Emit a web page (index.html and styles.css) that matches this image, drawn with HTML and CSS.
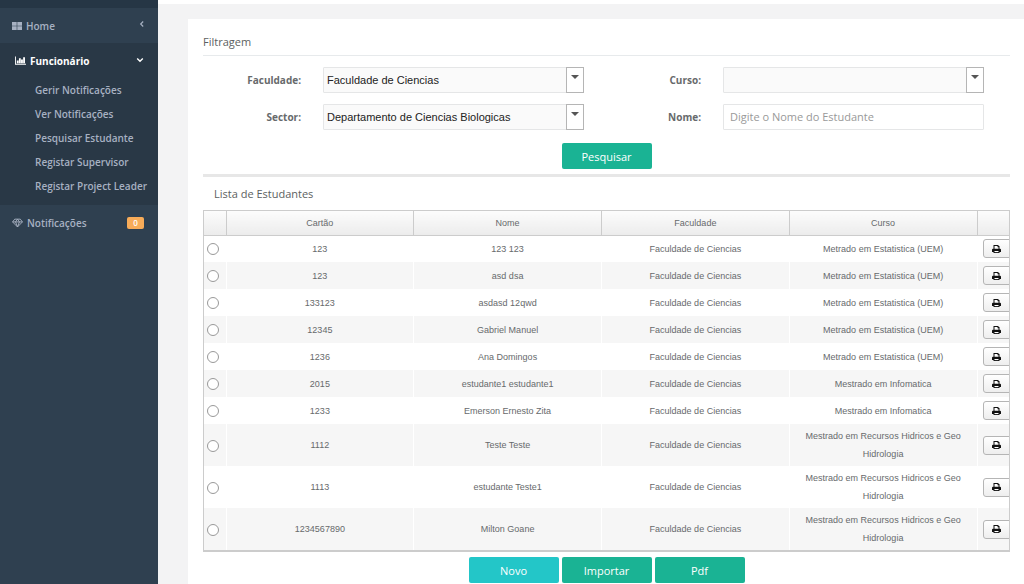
FILE: index.html
```html
<!DOCTYPE html>
<html lang="pt">
<head>
<meta charset="utf-8">
<title>Estudantes</title>
<link rel="stylesheet" href="styles.css">
</head>
<body>
<svg class="sprite" aria-hidden="true">
  <symbol id="printer" viewBox="0 0 18 16"><path fill="#111" d="M3 0h9l3 3v5H3z"/><path fill="#fff" d="M5 2h6v2.500h2V8H5z"/><path fill="#111" d="M2 7.500h14A2 2 0 0 1 18 9.500v4.500h-3v2H3v-2H0V9.500A2 2 0 0 1 2 7.500z"/><path fill="#fff" d="M5 12h8v2.200H5z"/></symbol>
</svg>
<div class="layout">
  <nav class="sidebar">
    <div class="brand"></div>
    <a class="item" href="#">
      <svg class="icon-home" viewBox="0 0 10 8"><path fill="currentColor" d="M0 0h4.700v3.700H0zM5.300 0H10v3.700H5.300zM0 4.300h4.700V8H0zM5.300 4.300H10V8H5.300z"/></svg>
      <span class="label">Home</span>
      <svg class="arrow raised" viewBox="0 0 8 8"><path fill="none" stroke="currentColor" stroke-width="1.200" d="M5.200 1.500L2.700 4l2.500 2.500"/></svg>
    </a>
    <div class="group">
      <a class="item active" href="#">
        <svg class="icon-chart" viewBox="0 0 12 9"><path fill="currentColor" d="M0 0h1v8h11v1H0zM2 4.500h2v3H2zM4.300 2h2v5.500h-2zM6.600 3.500h2v4h-2zM8.900 1h2v6.500h-2z"/></svg>
        <span class="label">Funcionário</span>
        <svg class="arrow" viewBox="0 0 8 8"><path fill="none" stroke="currentColor" stroke-width="1.400" d="M1.200 1.500L4 4.300 6.800 1.500"/></svg>
      </a>
      <ul class="submenu">
        <li><a href="#">Gerir Notificações</a></li>
        <li><a href="#">Ver Notificações</a></li>
        <li><a href="#">Pesquisar Estudante</a></li>
        <li><a href="#">Registar Supervisor</a></li>
        <li><a href="#">Registar Project Leader</a></li>
      </ul>
    </div>
    <a class="item" href="#">
      <svg class="icon-gem" viewBox="0 0 12 10"><path fill="none" stroke="currentColor" d="M3 .8h6l2.400 3L6 9.300.6 3.800zM.6 3.800h10.800M3.900 3.800L6 9.300l2.100-5.500M3.900 3.800L6 .8l2.100 3"/></svg>
      <span class="label">Notificações</span>
      <span class="badge">0</span>
    </a>
  </nav>
  <div class="page">
    <header class="topbar"></header>
    <main class="panel">
      <h1 class="title">Filtragem</h1>
      <form class="filters">
        <label for="fac">Faculdade:</label>
        <span class="combo"><select id="fac"><option>Faculdade de Ciencias</option></select></span>
        <label for="curso">Curso:</label>
        <span class="combo"><select id="curso"><option></option></select></span>
        <label class="first" for="sector">Sector:</label>
        <span class="combo"><select id="sector"><option>Departamento de Ciencias Biologicas</option></select></span>
        <label for="nome">Nome:</label>
        <input class="text" id="nome" type="text" placeholder="Digite o Nome do Estudante">
        <div class="submit"><button class="btn" type="button">Pesquisar</button></div>
      </form>
      <h2 class="subtitle">Lista de Estudantes</h2>
      <div class="grid">
        <table>
          <colgroup><col class="c-radio"><col><col><col><col><col class="c-print"></colgroup>
          <thead><tr><th></th><th>Cartão</th><th>Nome</th><th>Faculdade</th><th>Curso</th><th></th></tr></thead>
          <tbody>
            <tr><td><input type="radio" name="s" aria-label="123 123"></td><td>123</td><td>123 123</td><td>Faculdade de Ciencias</td><td>Metrado em Estatistica (UEM)</td><td><button class="print" type="button" aria-label="Imprimir"><svg><use href="#printer"/></svg></button></td></tr>
            <tr><td><input type="radio" name="s" aria-label="asd dsa"></td><td>123</td><td>asd dsa</td><td>Faculdade de Ciencias</td><td>Metrado em Estatistica (UEM)</td><td><button class="print" type="button" aria-label="Imprimir"><svg><use href="#printer"/></svg></button></td></tr>
            <tr><td><input type="radio" name="s" aria-label="asdasd 12qwd"></td><td>133123</td><td>asdasd 12qwd</td><td>Faculdade de Ciencias</td><td>Metrado em Estatistica (UEM)</td><td><button class="print" type="button" aria-label="Imprimir"><svg><use href="#printer"/></svg></button></td></tr>
            <tr><td><input type="radio" name="s" aria-label="Gabriel Manuel"></td><td>12345</td><td>Gabriel Manuel</td><td>Faculdade de Ciencias</td><td>Metrado em Estatistica (UEM)</td><td><button class="print" type="button" aria-label="Imprimir"><svg><use href="#printer"/></svg></button></td></tr>
            <tr><td><input type="radio" name="s" aria-label="Ana Domingos"></td><td>1236</td><td>Ana Domingos</td><td>Faculdade de Ciencias</td><td>Metrado em Estatistica (UEM)</td><td><button class="print" type="button" aria-label="Imprimir"><svg><use href="#printer"/></svg></button></td></tr>
            <tr><td><input type="radio" name="s" aria-label="estudante1 estudante1"></td><td>2015</td><td>estudante1 estudante1</td><td>Faculdade de Ciencias</td><td>Mestrado em Infomatica</td><td><button class="print" type="button" aria-label="Imprimir"><svg><use href="#printer"/></svg></button></td></tr>
            <tr><td><input type="radio" name="s" aria-label="Emerson Ernesto Zita"></td><td>1233</td><td>Emerson Ernesto Zita</td><td>Faculdade de Ciencias</td><td>Mestrado em Infomatica</td><td><button class="print" type="button" aria-label="Imprimir"><svg><use href="#printer"/></svg></button></td></tr>
            <tr><td><input type="radio" name="s" aria-label="Teste Teste"></td><td>1112</td><td>Teste Teste</td><td>Faculdade de Ciencias</td><td>Mestrado em Recursos Hidricos e Geo Hidrologia</td><td><button class="print" type="button" aria-label="Imprimir"><svg><use href="#printer"/></svg></button></td></tr>
            <tr><td><input type="radio" name="s" aria-label="estudante Teste1"></td><td>1113</td><td>estudante Teste1</td><td>Faculdade de Ciencias</td><td>Mestrado em Recursos Hidricos e Geo Hidrologia</td><td><button class="print" type="button" aria-label="Imprimir"><svg><use href="#printer"/></svg></button></td></tr>
            <tr><td><input type="radio" name="s" aria-label="Milton Goane"></td><td>1234567890</td><td>Milton Goane</td><td>Faculdade de Ciencias</td><td>Mestrado em Recursos Hidricos e Geo Hidrologia</td><td><button class="print" type="button" aria-label="Imprimir"><svg><use href="#printer"/></svg></button></td></tr>
          </tbody>
        </table>
      </div>
      <div class="actions">
        <button class="btn info" type="button">Novo</button>
        <button class="btn" type="button">Importar</button>
        <button class="btn" type="button">Pdf</button>
      </div>
    </main>
  </div>
</div>
</body>
</html>
```

FILE: styles.css
```css
*, *::before, *::after { box-sizing: border-box; }
body {
  margin: 0;
  font: 11px/16px "Open Sans", sans-serif;
  color: #676a6c;
  background: #f3f3f4;
}
a { color: inherit; text-decoration: none; }
.sprite { display: none; }
.layout { display: flex; min-height: 100vh; }

.sidebar {
  flex: 0 0 158px;
  background: #2f4050;
  color: #a7b1c2;
  font-size: 10px;
  font-weight: 600;
}
.brand { height: 8px; background: #263645; }
.item {
  display: flex;
  align-items: center;
  gap: 4px;
  height: 35px;
  padding: 0 14px 0 12px;
}
.item:first-of-type { padding-right: 12px; }
.label { flex: 1; }
.sidebar .active { color: #fff; font-weight: 700; padding-left: 15px; padding-right: 14px; }
.icon-home { width: 10px; height: 8px; }
.icon-chart { width: 11px; height: 9px; }
.icon-gem { width: 11px; height: 10px; }
.arrow { width: 8px; height: 8px; }
.raised { margin-bottom: 4px; }
.group { background: #293846; padding-bottom: 7px; }
.submenu { list-style: none; margin: 0; padding: 0 0 0 35px; }
.submenu a { display: block; line-height: 24px; white-space: nowrap; }
.badge {
  width: 17px;
  border-radius: 2px;
  background: #f8ac59;
  color: #fff;
  font-size: 8px;
  line-height: 12px;
  text-align: center;
}

.page { flex: 1; min-width: 0; display: flex; flex-direction: column; }
.topbar { height: 4px; background: #fff; }
.panel {
  flex: 1;
  margin: 15px 0 0 30px;
  padding: 15px 14px 0 15px;
  background: #fff;
}
.title, .subtitle { margin: 0; font-size: 11px; font-weight: 500; color: #5c5f61; }
.title { padding-bottom: 5px; border-bottom: 1px solid #e7eaec; }
.filters {
  display: grid;
  grid-template-columns: 98px 261px 95px 261px 1fr;
  column-gap: 22px;
  row-gap: 11px;
  align-items: center;
  padding: 11px 0 5px;
  border-bottom: 3px solid #e7e7e7;
}
.filters label { font-size: 10px; font-weight: 700; text-align: right; }
.filters .first { grid-column: 1; }
.combo { position: relative; display: flex; }
.combo::before {
  content: "";
  position: absolute;
  inset: 0 0 0 auto;
  width: 18px;
  border: 1px solid #b5b5b5;
  background: #fff;
  pointer-events: none;
}
.combo::after {
  content: "";
  position: absolute;
  top: 8px;
  right: 5px;
  border: 4px solid transparent;
  border-top-color: #555;
  border-bottom: 0;
  pointer-events: none;
}
select, .text {
  width: 100%;
  height: 26px;
  margin: 0;
  border: 1px solid #e5e6e7;
  border-radius: 1px;
}
select {
  appearance: none;
  padding: 0 20px 0 3px;
  background: #fafafa;
  color: #222;
  font: 11px "Liberation Sans", sans-serif;
}
.text { padding: 0 6px 2px; background: #fff; font: 11px "Open Sans", sans-serif; }
.text::placeholder { color: #999; }
.submit { grid-column: 1 / -1; display: flex; justify-content: center; padding-top: 2px; }
.btn {
  width: 90px;
  height: 26px;
  padding: 0;
  border: 0;
  border-radius: 2px;
  background: #1ab394;
  color: #fff;
  font: 11px "Open Sans", sans-serif;
}
.info { background: #23c6c8; }
.subtitle { padding: 9px 11px 8px; }

.grid { border: 1px solid #ccc; border-bottom-width: 2px; overflow: hidden; }
table {
  width: 100%;
  table-layout: fixed;
  border-collapse: collapse;
  font: 9px/18px "Liberation Sans", sans-serif;
  text-align: center;
}
.c-radio { width: 22px; }
.c-print { width: 32px; }
th, td { padding: 0; }
th {
  height: 24px;
  font-weight: 400;
  background: linear-gradient(#fcfcfc, #ececec);
  border-left: 1px solid #ccc;
  border-bottom: 1px solid #ccc;
}
th:first-child, td:first-child { border-left: 0; }
td { height: 27px; padding: 3px 12px; border-left: 1px solid #fff; }
td:first-child { padding: 0; }
td:last-child { padding: 0 0 0 5px; }
tr:nth-child(even) td { background: #f6f6f6; }
input[type="radio"] {
  appearance: none;
  display: block;
  width: 12px;
  height: 12px;
  margin: 1px auto 0 3px;
  border: 1px solid #999;
  border-radius: 50%;
  background: #fff;
}
input[type="radio"]:checked { border-width: 4px; }
.print {
  display: flex;
  align-items: center;
  justify-content: center;
  width: 30px;
  height: 19px;
  padding: 0 2px 0 0;
  border: 1px solid #b5b5b5;
  border-radius: 3px;
  background: linear-gradient(#fff, #eee);
}
.print svg { width: 9px; height: 8px; }
.actions { display: flex; justify-content: center; gap: 3px; padding: 5px 0 0; }
```
